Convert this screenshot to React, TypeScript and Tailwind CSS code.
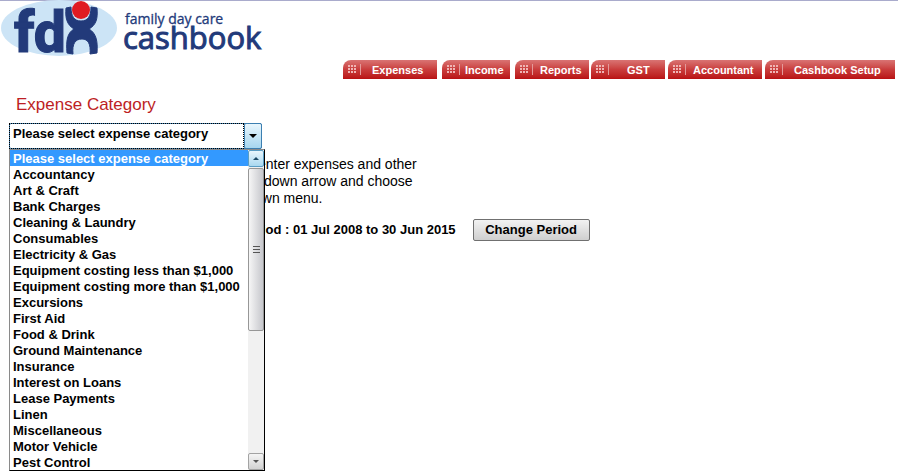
import React, { useState } from 'react'
import clsx from 'clsx'

type NavItem = {
  label: string
  className: string
}

const navItems: NavItem[] = [
  { label: 'Expenses', className: 'w-[94px] mr-[5px] pl-[29px]' },
  { label: 'Income', className: 'w-[68px] mr-[5px] pl-[23px]' },
  { label: 'Reports', className: 'w-[74px] mr-[2px] pl-[25px]' },
  { label: 'GST', className: 'w-[74px] mr-[3px] pl-[36px]' },
  { label: 'Accountant', className: 'w-[94px] mr-[3px] pl-[25px]' },
  { label: 'Cashbook Setup', className: 'w-[130px] pl-[29px]' },
]

const placeholder = 'Please select expense category'

const categories = [
  placeholder,
  'Accountancy',
  'Art & Craft',
  'Bank Charges',
  'Cleaning & Laundry',
  'Consumables',
  'Electricity & Gas',
  'Equipment costing less than $1,000',
  'Equipment costing more than $1,000',
  'Excursions',
  'First Aid',
  'Food & Drink',
  'Ground Maintenance',
  'Insurance',
  'Interest on Loans',
  'Lease Payments',
  'Linen',
  'Miscellaneous',
  'Motor Vehicle',
  'Pest Control',
]

const Logo: React.FC = () => (
  <svg
    width="280"
    height="58"
    viewBox="0 0 280 58"
    role="img"
    aria-label="Family day care cashbook"
    className="overflow-visible"
  >
    <ellipse cx="59" cy="27" rx="58" ry="28" fill="#cce4f6" />
    <text
      x="14"
      y="51"
      fill="#223a7a"
      stroke="#223a7a"
      strokeWidth="1"
      fontFamily="Roboto, 'Liberation Sans', sans-serif"
      fontWeight="800"
      fontSize="57"
    >
      fd
    </text>
    <path
      d="M66 7 L71 6 C71 15 74 20 81 20 C88 20 91 15 91 6 L97 7 C98 18 96 24 89 28 C96 32 98 40 97 52 L90 53 C91 43 88 38 82 38 C75 38 72 43 73 53 L67 52 C66 40 67 32 74 28 C67 24 65 17 66 7 Z"
      fill="#223a7a"
      stroke="#223a7a"
      strokeWidth="1"
    />
    <circle cx="81" cy="9" r="9" fill="#e01b22" />
    <g fill="#223a7a" stroke="#223a7a" fontFamily="'Open Sans', 'Noto Sans', sans-serif">
      <text x="125" y="23" fontSize="14" strokeWidth="0.3">family day care</text>
      <text x="123" y="48" fontSize="31" strokeWidth="1">cashbook</text>
    </g>
  </svg>
)

const TabGrip: React.FC = () => (
  <svg width="14" height="11" viewBox="0 0 14 11" className="absolute left-[5px] top-[4px]" aria-hidden="true">
    {[1, 4, 7].map((y) =>
      [0, 3, 6].map((x) => <rect key={`${x}-${y}`} x={x} y={y} width="2" height="2" fill="#efb5b5" />),
    )}
    <rect x="12" y="0" width="1" height="11" fill="#e39a9a" />
  </svg>
)

const ScrollBar: React.FC = () => (
  <div className="flex w-[16px] flex-col bg-[#f1f1f1]" aria-hidden="true">
    <div className="flex h-[17px] items-center justify-center rounded-xs border border-[#5a9dc4] bg-linear-to-b from-[#e8f6fd] to-[#a9d8f0]">
      <svg width="6" height="3" viewBox="0 0 6 3">
        <path d="M0 3 L3 0 L6 3 Z" fill="#1d4a66" />
      </svg>
    </div>
    <div className="mt-px flex h-[163px] items-center justify-center rounded-xs border border-[#979797] bg-linear-to-r from-[#f6f6f6] to-[#c6c7cc]">
      <svg width="7" height="8" viewBox="0 0 7 8">
        <path d="M0 .5h7M0 3.5h7M0 6.5h7" stroke="#555" strokeWidth="1" />
      </svg>
    </div>
    <div className="mt-auto flex h-[17px] items-center justify-center rounded-xs border border-[#a3a3a3] bg-linear-to-b from-[#f5f5f5] to-[#d2d2d2]">
      <svg width="6" height="3" viewBox="0 0 6 3">
        <path d="M0 0 L3 3 L6 0 Z" fill="#555" />
      </svg>
    </div>
  </div>
)

const CategorySelect: React.FC = () => {
  const [selected, setSelected] = useState(placeholder)

  return (
    <div className="relative w-[253px] text-[13px] font-bold">
      <select
        id="category"
        value={selected}
        onChange={(e) => setSelected(e.target.value)}
        className="block h-[26px] w-full appearance-none rounded-xs border border-[#3c7fb1] bg-white pb-[4px] pl-[3px] leading-[20px] text-black outline-none"
      >
        {categories.map((category) => (
          <option key={category}>{category}</option>
        ))}
      </select>
      <div className="pointer-events-none absolute inset-y-0 left-0 right-[18px] border border-dotted border-black" />
      <div className="pointer-events-none absolute inset-y-0 right-0 flex w-[18px] items-center justify-center rounded-xs border border-[#3c7fb1] bg-linear-to-b from-[#e8f6fd] to-[#a6d6ef]">
        <svg width="8" height="4" viewBox="0 0 8 4" aria-hidden="true">
          <path d="M0 0 L4 4 L8 0 Z" fill="#000" />
        </svg>
      </div>

      <div className="absolute left-0 top-full z-10 flex w-[256px] border border-r-black border-b-black border-l-[#8a8a8a] border-t-[#8a8a8a] bg-white">
        <ul role="listbox" aria-label="Expense categories" className="flex-1">
          {categories.map((category) => (
            <li
              key={category}
              role="option"
              aria-selected={category === selected}
              onClick={() => setSelected(category)}
              className={clsx(
                'h-[16px] whitespace-nowrap pl-[3px] leading-[18px]',
                category === selected ? 'bg-[#3399ff] text-white' : 'text-black',
              )}
            >
              {category}
            </li>
          ))}
        </ul>
        <ScrollBar />
      </div>
    </div>
  )
}

const App: React.FC = () => {
  return (
    <div className="min-h-screen bg-white font-['Liberation_Sans',Arial,sans-serif] text-black">
      <header className="border-t border-[#a9abcc]">
        <Logo />
        <nav className="mt-px flex justify-end pr-[3px]">
          {navItems.map((item) => (
            <a
              key={item.label}
              href="#"
              className={clsx(
                'relative h-[19px] whitespace-nowrap rounded-tl-lg bg-linear-to-b from-[#d97373] via-[#c93c3c] to-[#b90f12] text-[11px] font-bold leading-[21px] text-white',
                item.className,
              )}
            >
              <TabGrip />
              {item.label}
            </a>
          ))}
        </nav>
      </header>

      <main className="pl-[9px]">
        <h1 className="pl-[7px] pt-[16px] text-[17px] leading-[20px] text-[#bd1e24]">
          <label htmlFor="category">Expense Category</label>
        </h1>
        <div className="mt-[8px]">
          <CategorySelect />
        </div>

        <div className="pt-[7px] text-[14px] leading-[17px]">
          <p className="pl-[249px]">enter expenses and other</p>
          <p className="pl-[255px]">down arrow and choose</p>
          <p className="pl-[245px]">own menu.</p>
        </div>
        <div className="mt-[12px] flex items-center gap-[17px] pl-[232px]">
          <span className="text-[13px] font-bold">Period : 01 Jul 2008 to 30 Jun 2015</span>
          <button
            type="button"
            className="h-[22px] w-[117px] rounded-xs border border-[#707070] bg-linear-to-b from-[#f2f2f2] to-[#cfcfcf] text-[13px] font-bold leading-[20px]"
          >
            Change Period
          </button>
        </div>
      </main>
    </div>
  )
}

export default App
